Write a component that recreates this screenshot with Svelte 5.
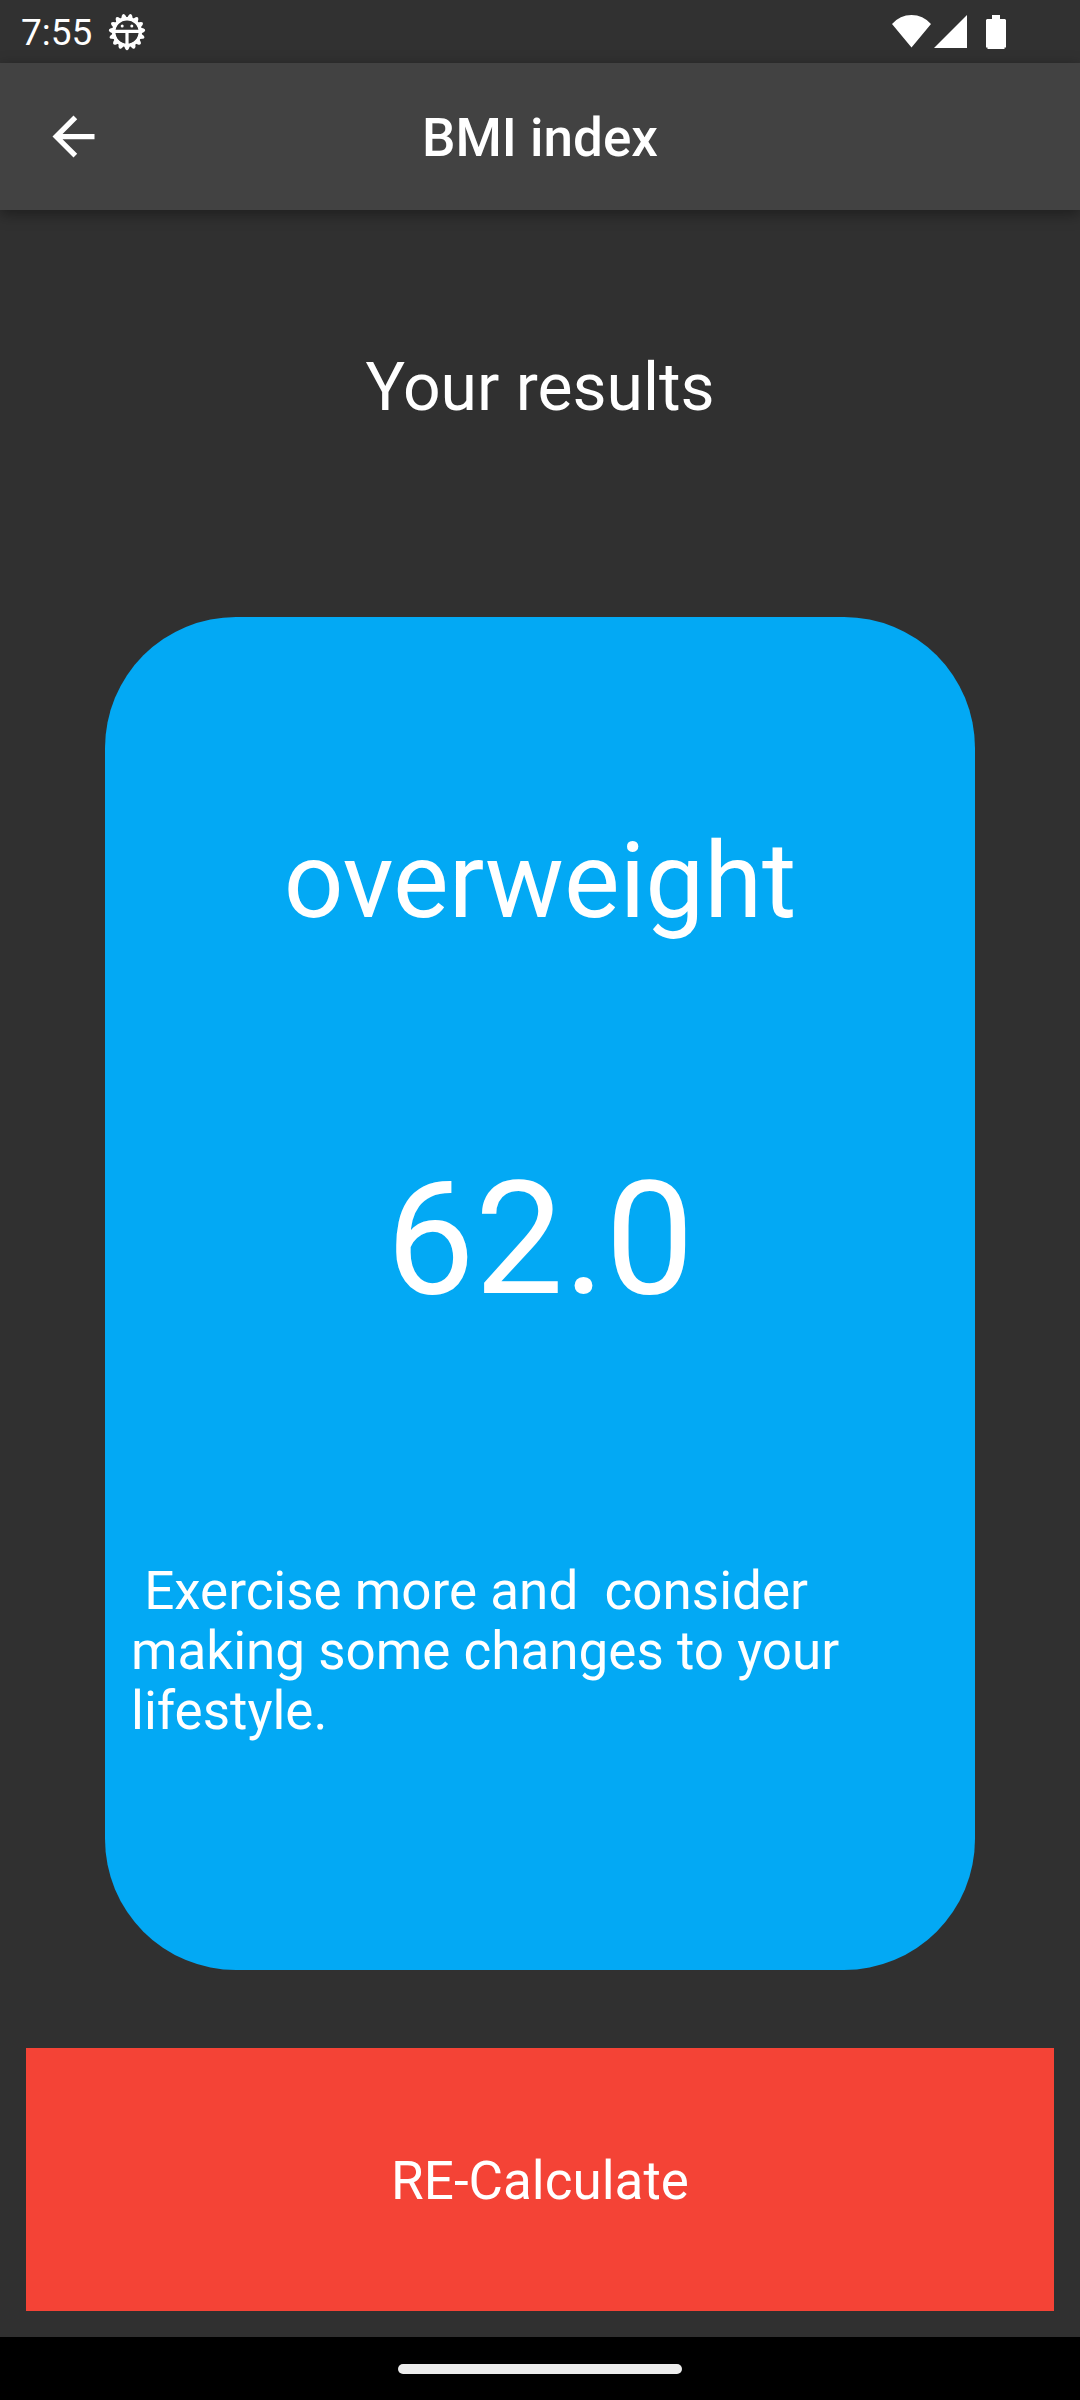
<script>
  let { category = 'overweight', bmi = 62, onback = () => {} } = $props();
  const advice = ' Exercise more and  consider making some changes to your lifestyle.';

  // Angles of the gear's fifteen teeth, the first one pointing down
  const teeth = Array.from({ length: 15 }, (_, i) => 90 + i * 24);
</script>

<div class="screen">
  <div class="status">
    <span class="time">7:55</span>
    <svg class="gear" viewBox="0 0 38 38" aria-hidden="true">
      <g fill="#fff">
        {#each teeth as angle}
          <path d="M31 15.300L36 17.300Q38.500 19 36 20.700L31 22.700z" transform="rotate({angle} 19 19)" />
        {/each}
      </g>
      <circle cx="19" cy="19" r="13.300" fill="none" stroke="#fff" stroke-width="3.400" />
      <path d="M7 18.300H31M19 19V31" stroke="#fff" stroke-width="3.200" />
      <circle cx="14.200" cy="13" r="1.500" fill="#fff" />
      <circle cx="23.800" cy="13" r="1.500" fill="#fff" />
    </svg>
    <svg class="signals" viewBox="0 0 114 34" aria-hidden="true">
      <path d="M0 9Q8 0 19.500 0T39 9L19.500 32.500zM42 33L75 0V33z" fill="#fff" />
      <path d="M100 0h8v4h5l1 1v27.500h-1.500v1.500h-17v-1.500h-1.500V5l1-1h5z" fill="#fff" />
    </svg>
  </div>

  <header class="bar">
    <button class="back" aria-label="Back" onclick={onback}>
      <svg viewBox="0 0 24 24" aria-hidden="true">
        <path d="M20 11H7.830l5.590-5.590L12 4l-8 8 8 8 1.410-1.410L7.830 13H20z" fill="#fff" />
      </svg>
    </button>
    <h1>BMI index</h1>
  </header>

  <main>
    <h2>Your results</h2>
    <section class="card">
      <p class="category">{category}</p>
      <p class="value">{bmi.toFixed(1)}</p>
      <p class="advice">{advice}</p>
    </section>
    <button class="recalculate" onclick={onback}>RE-Calculate</button>
  </main>

  <div class="nav"><span class="pill"></span></div>
</div>

<style>
  :global(body) {
    margin: 0;
    background: #303030;
  }

  .screen {
    display: flex;
    flex-direction: column;
    min-height: 100vh;
    background: #303030;
    color: #fff;
    font-family: Roboto, sans-serif;
  }

  h1,
  h2,
  p {
    margin: 0;
    font-weight: 400;
  }

  button {
    border: 0;
    padding: 0;
    background: none;
    color: inherit;
    font: inherit;
    cursor: pointer;
  }

  .status {
    display: flex;
    align-items: center;
    height: 63px;
    padding: 0 74px 0 21px;
    background: #313131;
  }

  .time {
    padding-top: 2px;
    font-size: 37px;
    line-height: 44px;
  }

  .gear {
    width: 38px;
    height: 38px;
    margin-left: 16px;
  }

  .signals {
    width: 114px;
    height: 34px;
    margin-left: auto;
  }

  .bar {
    display: grid;
    grid-template-columns: 147px 1fr 147px;
    align-items: center;
    height: 147px;
    background: #424242;
    box-shadow: 0 4px 14px rgba(0, 0, 0, 0.4);
  }

  .back {
    display: grid;
    place-items: center;
    height: 147px;
  }

  .back svg {
    width: 63px;
    height: 63px;
  }

  h1 {
    padding-top: 2px;
    font-size: 53px;
    line-height: 62px;
    font-weight: 500;
    text-align: center;
  }

  main {
    display: flex;
    flex: 1;
    flex-direction: column;
    padding: 0 26px 26px;
  }

  h2 {
    padding: 139px 0 190px;
    font-size: 66px;
    line-height: 78px;
    text-align: center;
  }

  .card {
    display: flex;
    flex: 1;
    flex-direction: column;
    justify-content: space-evenly;
    margin: 0 79px 78px;
    border-radius: 131px;
    background: #03a9f4;
    text-align: center;
  }

  .category {
    font-size: 105px;
    line-height: 123px;
  }

  .value {
    font-size: 158px;
    line-height: 185px;
  }

  .advice {
    padding: 26px;
    font-size: 53px;
    line-height: 60px;
    text-align: left;
    white-space: pre-wrap;
  }

  .recalculate {
    height: 263px;
    padding-top: 2px;
    background: #f44336;
    font-size: 53px;
    line-height: 62px;
  }

  .nav {
    display: grid;
    place-items: center;
    height: 63px;
    background: #000;
  }

  .pill {
    width: 284px;
    height: 10px;
    border-radius: 5px;
    background: #ececec;
  }
</style>
